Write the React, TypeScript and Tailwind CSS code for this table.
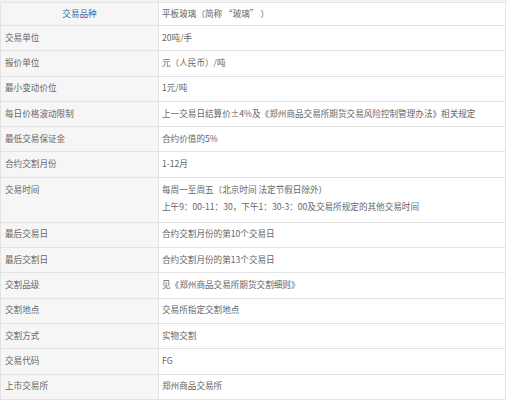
import React from 'react';

type Row = { label: string; value: string | string[] };

const rows: Row[] = [
  { label: '交易单位', value: '20吨/手' },
  { label: '报价单位', value: '元（人民币）/吨' },
  { label: '最小变动价位', value: '1元/吨' },
  { label: '每日价格波动限制', value: '上一交易日结算价±4%及《郑州商品交易所期货交易风险控制管理办法》相关规定' },
  { label: '最低交易保证金', value: '合约价值的5%' },
  { label: '合约交割月份', value: '1-12月' },
  {
    label: '交易时间',
    value: ['每周一至周五（北京时间 法定节假日除外）', '上午9：00-11：30，下午1：30-3：00及交易所规定的其他交易时间'],
  },
  { label: '最后交易日', value: '合约交割月份的第10个交易日' },
  { label: '最后交割日', value: '合约交割月份的第13个交易日' },
  { label: '交割品级', value: '见《郑州商品交易所期货交割细则》' },
  { label: '交割地点', value: '交易所指定交割地点' },
  { label: '交割方式', value: '实物交割' },
  { label: '交易代码', value: 'FG' },
  { label: '上市交易所', value: '郑州商品交易所' },
];

export default function App() {
  return (
    <div
      className="w-[508px] h-[400px] bg-white overflow-hidden text-[8.6px] text-[#666]"
      style={{ fontFamily: '"Noto Sans CJK SC", "Noto Sans", sans-serif' }}
    >
      <div className="h-[2px] bg-[#f2f2f2]" />
      <div className="w-[506px] border-t border-l border-r border-[#e3e3e3]">
        {/* header */}
        <div className="grid grid-cols-[158px_1fr] h-[23px] border-b border-[#e3e3e3]">
          <div className="flex items-center justify-center bg-[#f6f6f6] border-r border-[#e3e3e3] text-[#3c6aa8] pb-[2px]">
            交易品种
          </div>
          <div className="flex items-center px-[3px] pb-[2px]">平板玻璃（简称 “玻璃” ）</div>
        </div>

        {rows.map((row) =>
          Array.isArray(row.value) ? (
            <div key={row.label} className="grid grid-cols-[158px_1fr] h-[45px] border-b border-[#e3e3e3]">
              <div className="bg-[#f6f6f6] border-r border-[#e3e3e3] px-[4px] pt-[3.5px] leading-[17px]">
                {row.label}
              </div>
              <div className="flex flex-col px-[3px] pt-[3.5px] leading-[17px]">
                {row.value.map((line) => (
                  <span key={line}>{line}</span>
                ))}
              </div>
            </div>
          ) : (
            <div key={row.label} className="grid grid-cols-[158px_1fr] h-[25.3px] border-b border-[#e3e3e3]">
              <div className="flex items-center bg-[#f6f6f6] border-r border-[#e3e3e3] px-[4px] pb-[2px]">
                {row.label}
              </div>
              <div className="flex items-center px-[3px] pb-[2px]">{row.value}</div>
            </div>
          )
        )}
      </div>
    </div>
  );
}
